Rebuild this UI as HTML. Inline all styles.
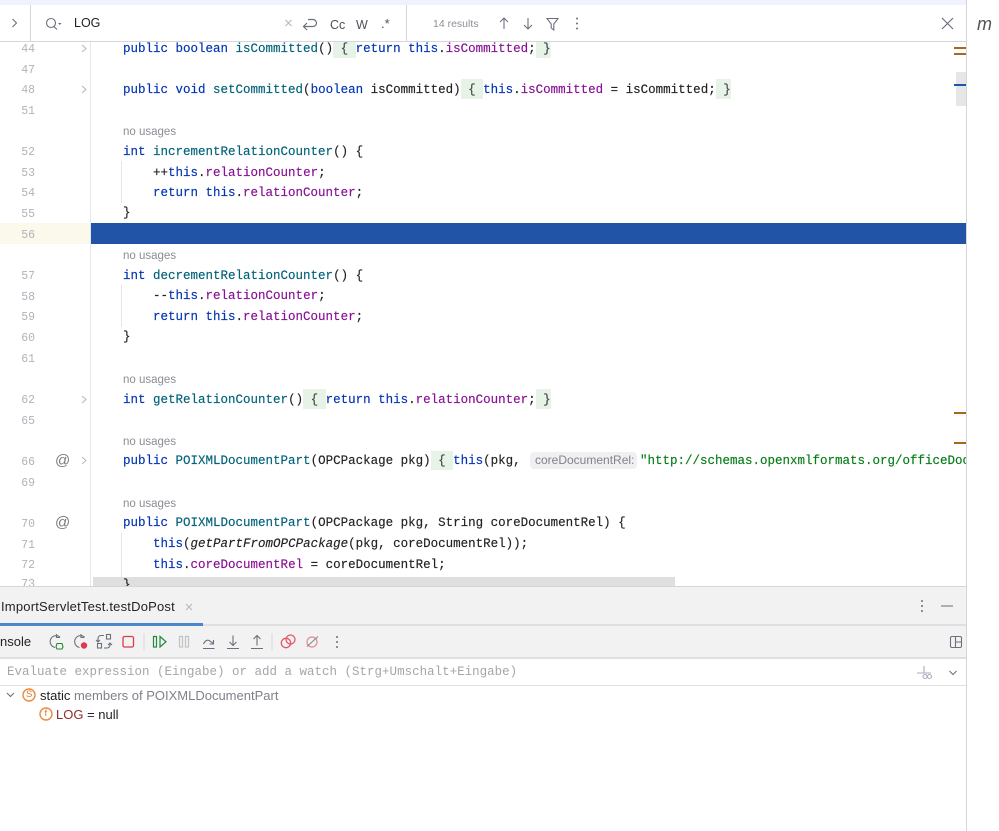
<!DOCTYPE html>
<html><head><meta charset="utf-8"><style>
html,body{margin:0;padding:0;background:#fff}
#r{position:relative;width:999px;height:831px;overflow:hidden;background:#fff;font-family:"Liberation Sans",sans-serif}
.a{position:absolute}
.c{position:absolute;left:123px;margin-top:1px;font:12.5px/20px "Liberation Mono",monospace;white-space:pre;color:#222;-webkit-text-stroke:.15px}
.n{position:absolute;left:0;width:35px;margin-top:2px;text-align:right;font:11.5px/20px "Liberation Mono",monospace;color:#b0b3ba}
.u{position:absolute;left:123px;margin-top:1px;font:11.5px/16px "Liberation Sans",sans-serif;color:#8a8d93}
.k{color:#0033b3}.m{color:#00627a}.f{color:#871094}.s{color:#067d17}
.b{background:#e8f3e8;display:inline-block;height:20px;margin-top:-1px;line-height:22px;vertical-align:top;color:#444}
svg{position:absolute;overflow:visible}
.t{position:absolute;white-space:pre}
</style></head><body><div id="r">
<div class="a" style="left:0;top:0;width:966px;height:5px;background:#eef3fc"></div>
<div class="a" style="left:0;top:5px;width:966px;height:36px;background:#fff"></div>
<div class="a" style="left:0;top:41px;width:966px;height:1px;background:#d5d6d9"></div>
<div class="a" style="left:30px;top:5px;width:1px;height:36px;background:#d5d6d9"></div>
<div class="a" style="left:406px;top:5px;width:1px;height:36px;background:#d5d6d9"></div>
<svg style="left:0;top:0" width="999" height="42" fill="none" stroke="#6c707e" stroke-width="1.1">
<path d="M12.5 19l4 4-4 4"/>
<circle cx="51" cy="23" r="4.5"/><path d="M54 26.500l3 3"/><path d="M58 23h3.500l-1.750 2z" fill="#6c707e" stroke="none"/>
<path d="M285.500 20l6 6M291.500 20l-6 6" stroke="#b4b8c4"/>
<path d="M308 19.500h5a3.500 3.500 0 0 1 0 7h-9.500M307 23l-3.500 3.500 3.500 3.500" stroke-width="1.2"/>
<path d="M504 29V18M500 22l4-4 4 4M528 18v11M524 25l4 4 4-4"/>
<path d="M547 18.500h11l-4.200 5.500v6l-2.600-2v-4z"/>
<path d="M942 18l11 11M953 18l-11 11" stroke-width="1.2"/>
<g fill="#6c707e" stroke="none"><circle cx="577" cy="18.500" r="1"/><circle cx="577" cy="23.500" r="1"/><circle cx="577" cy="28.500" r="1"/></g>
</svg>
<div class="t" style="left:74px;top:15px;font-size:12.500px;line-height:16px;color:#1f2024">LOG</div>
<div class="t" style="left:330px;top:17px;font-size:12.500px;line-height:16px;color:#4f5159">Cc</div>
<div class="t" style="left:356px;top:17px;font-size:12.500px;line-height:16px;color:#4f5159">W</div>
<div class="t" style="left:381px;top:16px;font-size:13px;line-height:16px;color:#4f5159">.*</div>
<div class="t" style="left:433px;top:17px;font-size:10.500px;line-height:15px;color:#8c8f96">14 results</div>
<div class="t" style="left:977px;top:14px;font-size:18px;line-height:20px;font-style:italic;color:#555">m</div>

<div class="a" style="left:90px;top:42px;width:1px;height:545px;background:#e6e7ea"></div>
<div class="a" style="left:966px;top:0;width:1px;height:831px;background:#d5d6d9"></div>
<div class="a" style="left:0;top:223px;width:90px;height:21px;background:#fbf8ec"></div>
<div class="a" style="left:91px;top:223px;width:875px;height:21px;background:#2154a6"></div>
<div class="a" style="left:121px;top:161px;width:1px;height:42px;background:#e4e5e8"></div>
<div class="a" style="left:121px;top:285px;width:1px;height:42px;background:#e4e5e8"></div>

<div class="n" style="top:38px">44</div><div class="n" style="top:59px">47</div><div class="n" style="top:79px">48</div><div class="n" style="top:100px">51</div>
<div class="n" style="top:141px">52</div><div class="n" style="top:162px">53</div><div class="n" style="top:182px">54</div><div class="n" style="top:203px">55</div><div class="n" style="top:224px">56</div>
<div class="n" style="top:265px">57</div><div class="n" style="top:286px">58</div><div class="n" style="top:306px">59</div><div class="n" style="top:327px">60</div><div class="n" style="top:348px">61</div>
<div class="n" style="top:389px">62</div><div class="n" style="top:410px">65</div><div class="n" style="top:451px">66</div><div class="n" style="top:472px">69</div>
<div class="n" style="top:513px">70</div><div class="n" style="top:534px">71</div><div class="n" style="top:554px">72</div><div class="a" style="left:0;top:575px;width:35px;height:11px;overflow:hidden;text-align:right;font:11.5px/20px 'Liberation Mono',monospace;color:#b0b3ba">73</div>

<svg style="left:0;top:0" width="100" height="600" fill="none" stroke="#b4b8bf" stroke-width="1">
<path d="M82 45l4 3.500-4 3.500M82 86l4 3.500-4 3.500M82 396l4 3.500-4 3.500M82 457l4 3.500-4 3.500"/>
</svg>
<div class="t" style="left:55px;top:452px;font-size:15px;line-height:18px;color:#77797f">@</div>
<div class="t" style="left:55px;top:514px;font-size:15px;line-height:18px;color:#77797f">@</div>

<div class="c" style="top:38px;clip-path:inset(3px 0 0 0)"><span class="k">public boolean</span> <span class="m">isCommitted</span>()<span class="b"> { </span><span class="k">return this</span>.<span class="f">isCommitted</span>;<span class="b"> }</span></div>
<div class="c" style="top:79px"><span class="k">public void</span> <span class="m">setCommitted</span>(<span class="k">boolean</span> isCommitted)<span class="b"> { </span><span class="k">this</span>.<span class="f">isCommitted</span> = isCommitted;<span class="b"> }</span></div>
<div class="u" style="top:123px">no usages</div>
<div class="c" style="top:141px"><span class="k">int</span> <span class="m">incrementRelationCounter</span>() {</div>
<div class="c" style="top:162px">    ++<span class="k">this</span>.<span class="f">relationCounter</span>;</div>
<div class="c" style="top:182px">    <span class="k">return this</span>.<span class="f">relationCounter</span>;</div>
<div class="c" style="top:202px">}</div>
<div class="u" style="top:247px">no usages</div>
<div class="c" style="top:265px"><span class="k">int</span> <span class="m">decrementRelationCounter</span>() {</div>
<div class="c" style="top:285px">    --<span class="k">this</span>.<span class="f">relationCounter</span>;</div>
<div class="c" style="top:306px">    <span class="k">return this</span>.<span class="f">relationCounter</span>;</div>
<div class="c" style="top:326px">}</div>
<div class="u" style="top:371px">no usages</div>
<div class="c" style="top:389px"><span class="k">int</span> <span class="m">getRelationCounter</span>()<span class="b"> { </span><span class="k">return this</span>.<span class="f">relationCounter</span>;<span class="b"> }</span></div>
<div class="u" style="top:433px">no usages</div>
<div class="c" style="top:450px;width:843px;overflow:hidden"><span class="k">public</span> <span class="m">POIXMLDocumentPart</span>(OPCPackage pkg)<span class="b"> { </span><span class="k">this</span>(pkg,</div>
<div class="a" style="left:530px;top:452px;width:107px;height:17px;background:#f0f0f2;border-radius:4px;font-size:12px;line-height:17px;color:#80838a;text-indent:5px;white-space:nowrap;overflow:hidden">coreDocumentRel:</div>
<div class="c" style="top:450px;left:640px;width:326px;overflow:hidden"><span class="s">"http://schemas.openxmlformats.org/officeDocument</span></div>
<div class="u" style="top:495px">no usages</div>
<div class="c" style="top:512px"><span class="k">public</span> <span class="m">POIXMLDocumentPart</span>(OPCPackage pkg, String coreDocumentRel) {</div>
<div class="c" style="top:533px">    <span class="k">this</span>(<i>getPartFromOPCPackage</i>(pkg, coreDocumentRel));</div>
<div class="c" style="top:554px">    <span class="k">this</span>.<span class="f">coreDocumentRel</span> = coreDocumentRel;</div>
<div class="a" style="left:121px;top:533px;width:1px;height:44px;background:#e4e5e8"></div>
<div class="a" style="left:93px;top:577px;width:582px;height:9px;background:#dfdfdf"></div>
<div class="c" style="top:574px;height:11px;overflow:hidden">}</div>

<div class="a" style="left:956px;top:72px;width:10px;height:34px;background:#e6e6e6"></div>
<div class="a" style="left:954px;top:47px;width:12px;height:2px;background:#a9671d"></div>
<div class="a" style="left:954px;top:53px;width:12px;height:2px;background:#a9671d"></div>
<div class="a" style="left:954px;top:84px;width:12px;height:2px;background:#2154a6"></div>
<div class="a" style="left:954px;top:412px;width:12px;height:2px;background:#a9671d"></div>
<div class="a" style="left:954px;top:442px;width:12px;height:2px;background:#a9671d"></div>

<div class="a" style="left:0;top:586px;width:966px;height:1px;background:#d5d6d9"></div>
<div class="a" style="left:0;top:587px;width:966px;height:71px;background:#f2f2f2"></div>
<div class="a" style="left:0;top:624px;width:966px;height:2px;background:#dfdfe1"></div>
<div class="a" style="left:0;top:623px;width:203px;height:3px;background:#4a86c8"></div>
<div class="a" style="left:0;top:657px;width:966px;height:2px;background:#dfdfe1"></div>
<div class="a" style="left:0;top:685px;width:966px;height:1px;background:#dfdfe1"></div>
<div class="t" style="left:1px;top:599px;font-size:13px;letter-spacing:.2px;line-height:16px;color:#1f2024">ImportServletTest.testDoPost</div>
<div class="t" style="left:-7.200px;top:634px;font-size:13px;line-height:16px;color:#1f2024">onsole</div>

<svg style="left:0;top:0" width="999" height="831" fill="none" stroke="#6c707e" stroke-width="1.1">
<path d="M186 604l6 6M192 604l-6 6" stroke="#b4b8bf"/>
<g fill="#6c707e" stroke="none"><circle cx="922" cy="601" r="1"/><circle cx="922" cy="606" r="1"/><circle cx="922" cy="611" r="1"/></g>
<path d="M941 606h12" stroke="#8a8d93" stroke-width="1.300"/>
<path d="M60 637a6 6 0 1 0-5 10.500M56.500 634v3.500h3.500"/><path d="M57 643.500h5l1 3.500-1 2h-5l-1-2z" stroke="#208a3c"/>
<path d="M84.500 637a6 6 0 1 0-5 10.500M81 634v3.500h3.500"/><circle cx="84" cy="645.500" r="3.200" fill="#db3b4b" stroke="none"/>
<path d="M98 641.500v-3a3 3 0 0 1 3-3h3M110 643v2a3 3 0 0 1-3 3h-3M96 640l2 2 2-2M108 645l2-2 2 2"/><rect x="97.500" y="643.500" width="4" height="4.500"/><rect x="106.500" y="634.500" width="4" height="4.500"/>
<rect x="123" y="636.500" width="10.500" height="10.500" rx="1.500" stroke="#db3b4b" stroke-width="1.300"/>
<rect x="153.500" y="636.500" width="3" height="10.500" stroke="#208a3c" stroke-width="1.200"/><path d="M160 636.500l6 5.250-6 5.250z" stroke="#208a3c" stroke-width="1.200"/>
<rect x="179.500" y="636.500" width="3" height="10.500" stroke="#c0c2c8" stroke-width="1.200"/><rect x="185.500" y="636.500" width="3" height="10.500" stroke="#c0c2c8" stroke-width="1.200"/>
<path d="M203 648.500h11.500M203.500 644c2-4.500 5-4.500 7-2.500l3 2M213.500 640v4h-4"/>
<path d="M227 648.500h12M233 635.500v10M229.500 642l3.500 3.500 3.500-3.500"/>
<path d="M251 648.500h12M257 645.500v-10M253.500 639l3.500-3.500 3.500 3.500"/>
<circle cx="286" cy="643" r="4.700" stroke="#e55765" stroke-width="1.300"/><circle cx="290.500" cy="639.500" r="4.500" stroke="#e55765" stroke-width="1.300"/>
<circle cx="312" cy="642" r="5" stroke="#e58a93" stroke-width="1.200"/><path d="M307 646.500l11-10" stroke="#888"/>
<g fill="#6c707e" stroke="none"><circle cx="337" cy="637" r="1"/><circle cx="337" cy="642" r="1"/><circle cx="337" cy="647" r="1"/></g>
<rect x="950.500" y="636.500" width="11" height="11" rx="1.500"/><path d="M955.500 637v10M956 642h5"/>
<path d="M917 673h14M924 666v7" stroke="#a8adbd"/><circle cx="925" cy="676.500" r="2" stroke="#a8adbd"/><circle cx="929.500" cy="676.500" r="2" stroke="#a8adbd"/>
<path d="M949.500 671l3.500 3.500 3.500-3.500"/>
<path d="M7 693l3.500 3.500 3.500-3.500"/>
<line x1="144" x2="144" y1="633" y2="651" stroke="#dadadd"/><line x1="272" x2="272" y1="633" y2="651" stroke="#dadadd"/>
<circle cx="29" cy="695" r="6" stroke="#e98a3e" stroke-width="1.400"/>
<circle cx="46" cy="714" r="6" stroke="#e98a3e" stroke-width="1.400"/>
</svg>
<div class="t" style="left:26px;top:690px;font-size:9.500px;line-height:10px;color:#d9782a">S</div>
<div class="t" style="left:44.500px;top:709px;font-size:9.500px;line-height:10px;color:#d9782a">f</div>
<div class="t" style="left:7px;top:664px;font:12.500px/16px 'Liberation Mono',monospace;color:#a4a6ac">Evaluate expression (Eingabe) or add a watch (Strg+Umschalt+Eingabe)</div>
<div class="t" style="left:40px;top:688px;font-size:13px;line-height:16px;color:#1f2024">static <span style="color:#7f8289">members of POIXMLDocumentPart</span></div>
<div class="t" style="left:56px;top:707px;font-size:13px;line-height:16px;color:#1f2024"><span style="color:#8c2d2d">LOG</span> = null</div>
</div></body></html>
